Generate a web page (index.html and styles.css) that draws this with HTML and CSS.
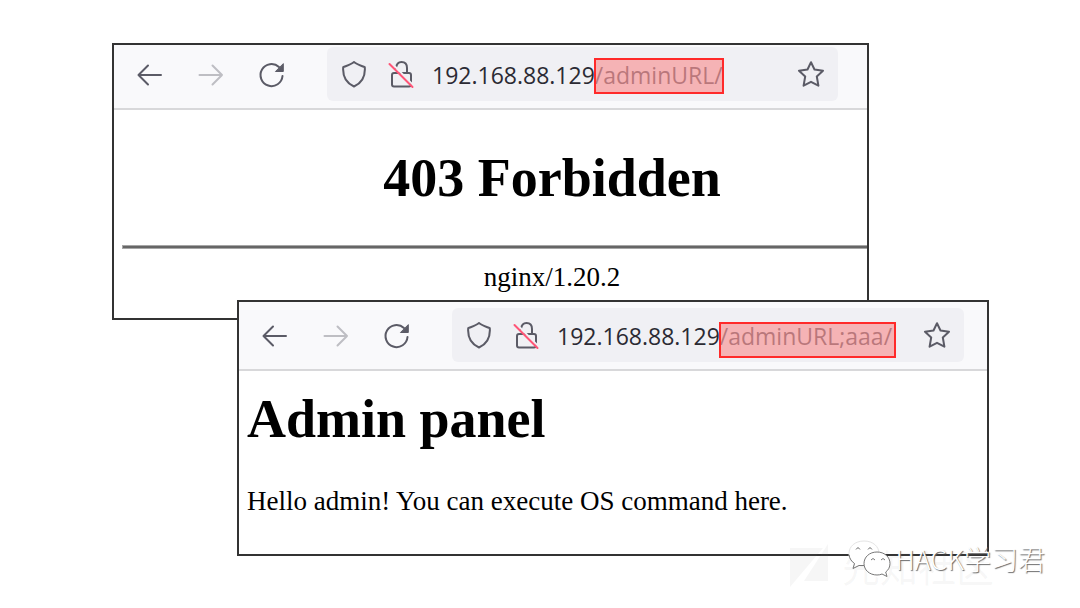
FILE: index.html
```html
<!DOCTYPE html>
<html lang="en">

<head>
    <meta charset="UTF-8">
    <meta name="viewport" content="width=device-width, initial-scale=1.0">
    <title>adminURL bypass</title>
    <link rel="stylesheet" href="styles.css">
</head>

<body>
    <!-- icons shared by both windows -->
    <svg class="sprite" aria-hidden="true">
        <symbol id="back" viewBox="0 0 28 28">
            <path d="M25 14H2.500M12 4.500L2.500 14l9.500 9.500" />
        </symbol>
        <symbol id="forward" viewBox="0 0 28 28">
            <path d="M2.500 14H25M15.500 4.500L25 14l-9.500 9.500" />
        </symbol>
        <symbol id="reload" viewBox="0 0 28 28">
            <path d="M24.500 15A11 11 0 1 1 21 6" />
            <path class="solid" d="M25.300 3v7.500h-7.500z" />
        </symbol>
        <symbol id="shield" viewBox="0 0 28 28">
            <path d="M14 1C11 3.300 7 4.600 3.200 6.200C2.600 14.500 6 22 14 25.500C22 22 25.400 14.500 24.800 6.200C21 4.600 17 3.300 14 1Z" />
        </symbol>
        <symbol id="lock" viewBox="0 0 28 28">
            <path d="M10 7C10.500 3 12.500 1 15.500 1C19 1 21 3.500 21 7v5" />
            <rect x="6" y="12" width="19" height="13.500" rx="2" />
            <path class="gap" d="M5.500 2L27 24" />
            <path class="slash" d="M3.500 3L26.500 26" />
        </symbol>
        <symbol id="star" viewBox="0 0 28 28">
            <path d="M14 1.200l3.500 7.300 8.500 1.200-6.200 5.800 1.600 9.200L14 20.800l-7.400 3.900 1.600-9.200L2 9.700l8.500-1.200z" />
        </symbol>
    </svg>

    <main class="desktop">
        <section class="window forbidden">
            <div class="toolbar">
                <button class="nav" aria-label="Back"><svg><use href="#back" /></svg></button>
                <button class="nav" aria-label="Forward" disabled><svg><use href="#forward" /></svg></button>
                <button class="nav" aria-label="Reload"><svg><use href="#reload" /></svg></button>
                <div class="urlbar">
                    <button aria-label="Tracking protection"><svg><use href="#shield" /></svg></button>
                    <button aria-label="Connection not secure"><svg><use href="#lock" /></svg></button>
                    <div class="address">
                        <input type="text" aria-label="Address" value="192.168.88.129/adminURL/">
                        <span class="highlight"></span>
                    </div>
                    <button aria-label="Bookmark"><svg><use href="#star" /></svg></button>
                </div>
            </div>
            <div class="page">
                <h1>403 Forbidden</h1>
                <hr>
                <p>nginx/1.20.2</p>
            </div>
        </section>

        <section class="window admin">
            <div class="toolbar">
                <button class="nav" aria-label="Back"><svg><use href="#back" /></svg></button>
                <button class="nav" aria-label="Forward" disabled><svg><use href="#forward" /></svg></button>
                <button class="nav" aria-label="Reload"><svg><use href="#reload" /></svg></button>
                <div class="urlbar">
                    <button aria-label="Tracking protection"><svg><use href="#shield" /></svg></button>
                    <button aria-label="Connection not secure"><svg><use href="#lock" /></svg></button>
                    <div class="address">
                        <input type="text" aria-label="Address" value="192.168.88.129/adminURL;aaa/">
                        <span class="highlight"></span>
                    </div>
                    <button aria-label="Bookmark"><svg><use href="#star" /></svg></button>
                </div>
            </div>
            <div class="page">
                <h1>Admin panel</h1>
                <p>Hello admin! You can execute OS command here.</p>
            </div>
        </section>

        <div class="community" lang="zh">
            <svg viewBox="0 0 42 44" aria-hidden="true">
                <path d="M0 4h33L0 43zM38 0v37H14z" />
            </svg>
            <span>先知社区</span>
        </div>

        <div class="account" lang="zh">
            <svg viewBox="0 0 44 38" aria-hidden="true">
                <path class="back" d="M16 1C7 1 1 6.500 1 13.500c0 4 2 7.500 5.500 10L5 28.500l6-3c8 2 20-1 20-12C31 6.500 25 1 16 1z" />
                <path class="shade" d="M1 15c.5 3.500 2.500 6.500 5.500 8.500L5 28.500l6-3h5" />
                <path class="front" d="M29 12c-7.500 0-13 5-13 11.500S21.500 35 29 35c2 0 3.500-.3 5-1l5 2.500-1.300-4.500C40.500 30 42 27 42 23.500 42 17 36.500 12 29 12z" />
                <path class="eyes" d="M8 9.500q2-3.500 4 0M20 9.500q2-3.500 4 0M23 20q2-3 4 0M33 20q2-3 4 0" />
            </svg>
            <span>HACK学习君</span>
        </div>
    </main>
</body>

</html>
```
FILE: styles.css
```css
* {
    box-sizing: border-box;
    padding: 0;
    margin: 0;
}

body {
    background-color: #fff;
    color: #000;
    font-family: "Liberation Serif", "Times New Roman", serif;
    font-size: 27px;
    line-height: 30px;
}

.sprite {
    position: absolute;
    width: 0;
    height: 0;
}

.desktop {
    position: relative;
    min-height: 100vh;
    overflow: hidden;
}

/* windows */
.window {
    position: absolute;
    border: 2px solid #333;
    background-color: #fff;
    overflow: hidden;
}

.forbidden {
    top: 43px;
    left: 112px;
    right: 211px;
}

.admin {
    top: 300px;
    left: 237px;
    right: 91px;
}

/* toolbar */
.toolbar {
    display: flex;
    align-items: center;
    padding: 6px 23px 7px 5px;
    border-bottom: 2px solid #d8d8da;
    background-color: #f9f9fb;
}

.forbidden .toolbar {
    padding-top: 2px;
    padding-right: 29px;
}

button {
    display: flex;
    justify-content: center;
    align-items: center;
    padding-top: 2px;
    border: 0;
    background-color: transparent;
    color: #5b5b66;
    cursor: pointer;
}

button:disabled {
    color: #bebec3;
    cursor: default;
}

button svg {
    width: 28px;
    height: 28px;
    fill: none;
    stroke: currentColor;
    stroke-width: 2;
    stroke-linecap: round;
    stroke-linejoin: round;
}

.nav {
    width: 61px;
    height: 54px;
}

.solid {
    fill: currentColor;
    stroke-width: 1;
}

.gap {
    stroke: #f0f0f4;
}

.slash {
    stroke: #ff5577;
}

.urlbar {
    display: flex;
    align-items: center;
    flex: 1;
    gap: 18px;
    height: 54px;
    margin-left: 25px;
    padding: 0 13px;
    border-radius: 6px;
    background-color: #f0f0f4;
}

.address {
    position: relative;
    flex: 1;
    min-width: 0;
}

.address input {
    display: block;
    width: 100%;
    height: 54px;
    padding-top: 2px;
    border: 0;
    outline: none;
    background-color: transparent;
    color: #2b2a33;
    font-family: "Open Sans", "Noto Sans", sans-serif;
    font-size: 23px;
}

/* red box over the path part of the address */
.highlight {
    position: absolute;
    top: 11px;
    left: 162px;
    width: 130px;
    height: 36px;
    border: 2px solid #ff2a2a;
    background-color: rgba(246, 153, 154, 0.7);
    pointer-events: none;
}

.admin .highlight {
    top: 14px;
    width: 177px;
}

/* page content */
.page {
    padding: 18px 8px 38px;
}

h1 {
    margin-bottom: 37px;
    font-size: 54px;
    line-height: 60px;
}

/* this page is wider than its window, so the rule runs off the edge */
.forbidden .page {
    margin-right: -123px;
    padding-top: 38px;
    padding-bottom: 26px;
    text-align: center;
}

hr {
    height: 4px;
    margin-bottom: 13px;
    border: 1px solid #a6a6a6;
    background-color: #666;
}

/* watermarks */
.community,
.account {
    position: absolute;
    display: flex;
    align-items: center;
    font-family: "Noto Sans CJK SC", sans-serif;
    white-space: nowrap;
}

.community {
    right: 86px;
    bottom: 18px;
    gap: 10px;
    color: rgba(130, 130, 130, 0.07);
    font-size: 38px;
    line-height: 48px;
}

.community svg {
    width: 42px;
    height: 44px;
    fill: currentColor;
}

.account {
    right: 35px;
    bottom: 30px;
    gap: 4px;
    color: #fff;
    font-size: 27px;
    font-weight: 300;
    line-height: 38px;
    text-shadow: 1px 1px 1px #666;
}

.account svg {
    width: 44px;
    height: 38px;
    fill: #fff;
    stroke: #777;
    stroke-width: 1;
}

.account .back {
    stroke: #e4e4e4;
}

.account .shade,
.account .eyes {
    fill: none;
}
```
